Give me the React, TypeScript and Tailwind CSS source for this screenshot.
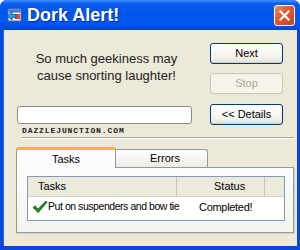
import React from "react";

const ui = { fontFamily: '"Liberation Sans", Arial, sans-serif' };

function AppIcon() {
  return (
    <svg width="16" height="16" viewBox="0 0 16 16">
      <rect x="2" y="2" width="13" height="12" rx="1" fill="#f4f4f4" stroke="#5a6f9a" strokeWidth="1" />
      <rect x="2.5" y="2.5" width="12" height="3" fill="#3a78d8" />
      <rect x="9" y="7" width="5" height="5" fill="#e04a2a" />
      <path d="M1 9 L6 5 L6 7.5 L10 7.5 L10 10.5 L6 10.5 L6 13 Z" fill="#2aa0e8" stroke="#0b4aa8" strokeWidth="0.8" />
    </svg>
  );
}

function Check() {
  return (
    <svg width="16" height="14" viewBox="0 0 16 14" className="shrink-0">
      <path d="M1 7.5 L3.2 5.8 L6 9 L13.8 1 L15.2 2.2 L6.2 12.8 Z" fill="#1f8a1f" stroke="#0d5e0d" strokeWidth="0.6" />
    </svg>
  );
}

function XPButton({ children, disabled }: { children: React.ReactNode; disabled?: boolean }) {
  return (
    <div
      className={
        "h-[21px] w-[73px] rounded-[3px] border flex items-center justify-center text-[11px] " +
        (disabled
          ? "border-[#c9c7ba] bg-[#f5f4ea] text-[#aca899]"
          : "border-[#003c74] bg-[linear-gradient(#ffffff,#f3f2ec_70%,#e3e1d6)] text-black shadow-[inset_0_-1px_0_#d6d0c5]")
      }
    >
      {children}
    </div>
  );
}

export default function App() {
  return (
    <div className="w-[300px] h-[250px] flex flex-col rounded-t-[7px] overflow-hidden bg-[#0a46d8]" style={ui}>
      {/* title bar */}
      <div className="h-[30px] shrink-0 flex items-center pl-[5px] pr-[5px] bg-[linear-gradient(#3d8fff_0%,#0a5ff0_12%,#0055ea_40%,#0058ee_70%,#0050e0_90%,#0043c8_100%)]">
        <div className="w-[18px] h-[18px] flex items-center justify-center">
          <AppIcon />
        </div>
        <div className="ml-[4px] text-white font-bold text-[18px] leading-none [text-shadow:1px_1px_0_#0a2a8a]">Dork Alert!</div>
        <div className="ml-auto w-[21px] h-[21px] rounded-[3px] border border-white bg-[linear-gradient(135deg,#f08a6a,#e2562f_45%,#c8401e)] flex items-center justify-center">
          <svg width="11" height="11" viewBox="0 0 11 11">
            <path d="M1.5 1.5 L9.5 9.5 M9.5 1.5 L1.5 9.5" stroke="white" strokeWidth="2.2" strokeLinecap="square" />
          </svg>
        </div>
      </div>

      {/* client */}
      <div className="mx-[3px] h-[216px] bg-[#ece9d8] flex flex-col border-l border-[#1d66ee]">
        <div className="h-[107px] shrink-0 flex pl-[13px] pt-[13px]">
          <div className="w-[175px] flex flex-col">
            <div className="pt-[7px] pl-[4px] h-[47px] text-center text-[13px] leading-[17px] text-[#222]">
              So much geekiness may
              <br />
              cause snorting laughter!
            </div>
            <div className="mt-[16px] h-[18px] rounded-[3px] border border-[#8d8c86] bg-white" />
            <div
              className="mt-[3px] pl-[5px] text-[8px] leading-[8px] font-bold tracking-[0.9px] text-[#222]"
              style={{ fontFamily: '"Liberation Mono", "DejaVu Sans Mono", monospace' }}
            >
              DAZZLEJUNCTION.COM
            </div>
          </div>
          <div className="ml-[18px] flex flex-col gap-[9px]">
            <XPButton>Next</XPButton>
            <XPButton disabled>Stop</XPButton>
            <div className="mt-[1px]">
              <XPButton>&lt;&lt; Details</XPButton>
            </div>
          </div>
        </div>

        {/* separator */}
        <div className="ml-[18px] w-[272px] h-[2px] border-t border-[#aca899] border-b border-b-white" />

        {/* tabs */}
        <div className="mt-[8px] ml-[12px] flex items-end h-[20px] relative z-10">
          <div className="w-[100px] h-[21px] mb-[-1px] bg-[#fcfcfe] border-x border-[#919b9c] rounded-t-[3px] border-t-[3px] border-t-[#f7b232] flex items-center justify-center text-[11px] text-black">
            Tasks
          </div>
          <div className="w-[92px] h-[18px] bg-[linear-gradient(#ffffff,#ecebe6)] border-t border-r border-[#919b9c] rounded-tr-[3px] flex items-center pl-[34px] text-[11px] text-black">
            Errors
          </div>
        </div>
        <div className="ml-[12px] w-[278px] h-[66px] border border-[#919b9c] bg-[linear-gradient(#fcfcfe,#f4f3ee)] shadow-[1px_1px_0_#d0cfc6] pt-[8px] pl-[10px]">
          <div className="w-[258px] h-[45px] border border-[#7f9db9] bg-white flex flex-col">
            <div className="h-[20px] bg-[#ebeadb] border-b border-[#d6d2c2] flex items-center text-[11px] text-black">
              <div className="w-[149px] h-full flex items-center pl-[10px] border-r border-[#c7c5b2]">Tasks</div>
              <div className="w-[88px] h-full flex items-center pl-[37px] border-r border-[#c7c5b2]">Status</div>
            </div>
            <div className="h-[20px] flex items-center text-[10.5px] text-black tracking-[-0.45px]">
              <div className="w-[149px] flex items-center pl-[4px]">
                <Check />
                <span className="whitespace-nowrap">Put on suspenders and bow tie</span>
              </div>
              <div className="pl-[22px] text-[11px] tracking-[-0.3px]">Completed!</div>
            </div>
          </div>
        </div>
      </div>
    </div>
  );
}
